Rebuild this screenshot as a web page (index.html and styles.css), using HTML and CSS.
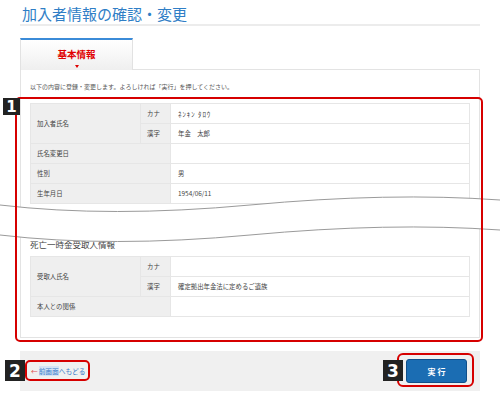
FILE: index.html
```html
<!DOCTYPE html>
<html lang="ja">
<head>
<meta charset="utf-8">
<title>加入者情報の確認・変更</title>
<link rel="stylesheet" href="styles.css">
</head>
<body>
<div class="page">
  <h1 class="title">加入者情報の確認・変更</h1>

  <div class="tabs">
    <div class="tab">
      <span class="tab-label">基本情報</span>
      <span class="tab-arrow"></span>
    </div>
  </div>

  <div class="panel">
    <p class="intro">以下の内容に登録・変更します。よろしければ「実行」を押してください。</p>

    <table class="info">
      <tr>
        <th class="lbl" rowspan="2">加入者氏名</th>
        <th class="sub">カナ</th>
        <td class="val"><span class="kana">ﾈﾝｷﾝ ﾀﾛｳ</span></td>
      </tr>
      <tr>
        <th class="sub">漢字</th>
        <td class="val">年金　太郎</td>
      </tr>
      <tr>
        <th class="lbl" colspan="2">氏名変更日</th>
        <td class="val"></td>
      </tr>
      <tr>
        <th class="lbl" colspan="2">性別</th>
        <td class="val">男</td>
      </tr>
      <tr>
        <th class="lbl" colspan="2">生年月日</th>
        <td class="val">1954/06/11</td>
      </tr>
    </table>

    <h2 class="section">死亡一時金受取人情報</h2>

    <table class="info">
      <tr>
        <th class="lbl" rowspan="2">受取人氏名</th>
        <th class="sub">カナ</th>
        <td class="val"></td>
      </tr>
      <tr>
        <th class="sub">漢字</th>
        <td class="val">確定拠出年金法に定めるご遺族</td>
      </tr>
      <tr>
        <th class="lbl" colspan="2">本人との関係</th>
        <td class="val"></td>
      </tr>
    </table>
  </div>

  <div class="footer">
    <a class="back" href="#"><span class="back-arrow">←</span><span class="hl">前画面</span>へもどる</a>
    <button class="exec" type="button">実行</button>
  </div>

  <svg class="cut" viewBox="0 0 500 400" width="500" height="400" aria-hidden="true">
    <path d="M0 205 Q110 218 250 205 T500 200 L500 230 Q390 222 250 235 Q110 248 0 235 Z" fill="#fff"/>
    <path d="M0 205 Q110 218 250 205 T500 200" fill="none" stroke="#9a9a9a" stroke-width="1"/>
    <path d="M0 235 Q110 248 250 235 T500 230" fill="none" stroke="#9a9a9a" stroke-width="1"/>
  </svg>

  <div class="mark mark-1"></div>
  <div class="mark mark-2"></div>
  <div class="mark mark-3"></div>
  <div class="badge badge-1">1</div>
  <div class="badge badge-2">2</div>
  <div class="badge badge-3">3</div>
</div>
</body>
</html>
```

FILE: styles.css
```css
* { box-sizing: border-box; }
html, body { margin: 0; padding: 0; background: #fff; }
body {
  font-family: "Noto Sans CJK JP", "Noto Sans", sans-serif;
  color: #444;
}
.page {
  position: relative;
  width: 500px;
  height: 400px;
  padding: 0 20px;
  overflow: hidden;
}
.title {
  margin: 0;
  padding: 4px 0 0 2px;
  height: 26px;
  font-size: 15px;
  line-height: 20px;
  font-weight: normal;
  color: #2f7ec6;
  border-bottom: 2px solid #ececec;
}
.tabs {
  display: flex;
  margin-top: 12px;
  position: relative;
  z-index: 1;
  margin-bottom: -1px;
}
.tab {
  width: 113px;
  height: 32px;
  border-top: 2px solid #3b8bd8;
  border-left: 1px solid #e2e2e2;
  border-right: 1px solid #e2e2e2;
  background: linear-gradient(#ffffff, #efefef);
  display: flex;
  flex-direction: column;
  align-items: center;
  padding-top: 8px;
}
.tab-label {
  font-size: 9.5px;
  line-height: 12px;
  font-weight: bold;
  color: #e00000;
}
.tab-arrow {
  margin-top: 5px;
  width: 0;
  height: 0;
  border-left: 2.5px solid transparent;
  border-right: 2.5px solid transparent;
  border-top: 3px solid #e00000;
}
.panel {
  border: 1px solid #e3e3e3;
  padding: 0 9px 20px 9px;
}
.intro {
  margin: 0;
  padding: 11px 0 11px 0;
  font-size: 6px;
  line-height: 11px;
  color: #555;
}
.info {
  width: 100%;
  border-collapse: collapse;
  border: 1px solid #dcdcdc;
  table-layout: fixed;
}
.info th, .info td {
  height: 20px;
  padding: 0 6px;
  font-size: 6.4px;
  font-weight: normal;
  text-align: left;
  border: 1px solid #e6e6e6;
  color: #444;
}
.info .lbl { width: 110px; background: #efefef; }
.info .sub { width: 30px; background: #efefef; }
.info .val { background: #fff; padding-left: 7px; }
.kana { font-size: 7px; letter-spacing: 0.9px; }
.section {
  margin: 34px 0 0 0;
  padding-bottom: 6px;
  font-size: 8.5px;
  line-height: 12px;
  font-weight: normal;
  color: #444;
}
.footer {
  margin-top: 13px;
  height: 40px;
  background: #f0f0f0;
  display: flex;
  align-items: center;
  justify-content: space-between;
  padding: 0 13px 0 11px;
}
.back {
  font-size: 6.7px;
  color: #3b7cc9;
  text-decoration: none;
  display: flex;
  align-items: center;
}
.back-arrow { color: #e05050; margin-right: 1px; }
.hl { background: #d5e3f4; }
.exec {
  width: 61px;
  height: 24px;
  background: #1b6db3;
  border: 1px solid #0f4f8a;
  border-radius: 3px;
  color: #fff;
  font-family: inherit;
  font-size: 8px;
  font-weight: bold;
  letter-spacing: 2px;
  padding: 0 0 0 2px;
}
.cut {
  position: absolute;
  left: 0;
  top: 0;
  pointer-events: none;
}
.mark {
  position: absolute;
  border: 2px solid #d60000;
  border-radius: 5px;
}
.mark-1 { left: 15px; top: 97px; width: 468px; height: 245px; }
.mark-2 { left: 25px; top: 360px; width: 65px; height: 21px; }
.mark-3 { left: 397px; top: 353px; width: 77px; height: 34px; border-radius: 6px; }
.badge {
  position: absolute;
  background: #222;
  color: #fff;
  font-family: "DejaVu Sans", sans-serif;
  font-weight: bold;
  display: flex;
  align-items: center;
  justify-content: center;
}
.badge-1 { left: 3px; top: 98px; width: 17px; height: 17px; font-size: 15px; }
.badge-2 { left: 5px; top: 360px; width: 20px; height: 21px; font-size: 17px; }
.badge-3 { left: 383px; top: 360px; width: 20px; height: 21px; font-size: 17px; }
```
